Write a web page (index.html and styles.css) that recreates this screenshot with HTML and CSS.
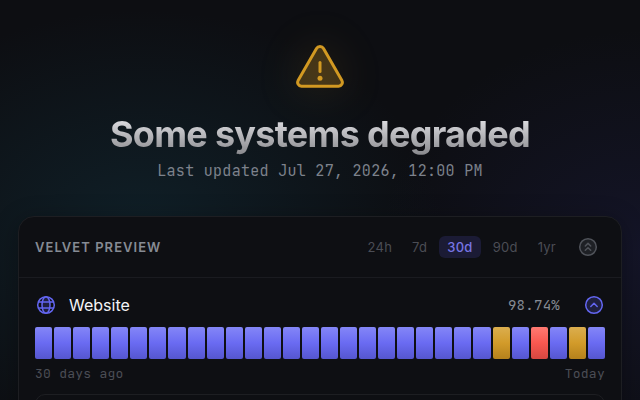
FILE: index.html
```html
<!DOCTYPE html>
<html lang="en">
<head>
    <meta charset="UTF-8">
    <meta name="viewport" content="width=device-width, initial-scale=1.0">
    <title>System Status</title>
    <link rel="stylesheet" href="styles.css">
</head>
<body>
    <header class="hero">
        <svg class="hero-icon" viewBox="0 0 64 64" aria-hidden="true">
            <path d="M28.500 12.600 a4 4 0 0 1 7 0 L53.900 44.600 a3.800 3.800 0 0 1 -3.300 5.600 H13.400 a3.800 3.800 0 0 1 -3.300 -5.600 Z"/>
            <path class="mark" d="M32 26.500v9"/>
            <circle cx="32" cy="42.300" r="2.500"/>
        </svg>
        <h1>Some systems degraded</h1>
        <p class="updated">Last updated Jul 27, 2026, 12:00 PM</p>
    </header>

    <main class="card">
        <div class="card-header">
            <h2>Velvet Preview</h2>
            <div class="ranges">
                <button type="button">24h</button>
                <button type="button">7d</button>
                <button type="button" class="active">30d</button>
                <button type="button">90d</button>
                <button type="button">1yr</button>
            </div>
            <button type="button" class="toggle toggle-all" aria-label="Collapse all">
                <svg viewBox="0 0 20 20">
                    <circle cx="10" cy="10" r="8.300"/>
                    <path d="M7.300 9l2.700-2.600 2.700 2.600M7.300 13.300l2.700-2.600 2.700 2.600"/>
                </svg>
            </button>
        </div>

        <section class="service">
            <div class="service-row">
                <svg class="globe" viewBox="0 0 20 20" aria-hidden="true">
                    <circle cx="10" cy="10" r="8.300"/>
                    <ellipse cx="10" cy="10" rx="4" ry="8.300"/>
                    <path d="M2.500 7h15M2.500 13h15"/>
                </svg>
                <h3>Website</h3>
                <span class="uptime">98.74%</span>
                <button type="button" class="toggle" aria-label="Collapse Website">
                    <svg viewBox="0 0 20 20">
                        <circle cx="10" cy="10" r="8.300"/>
                        <path d="M6.800 11.500l3.200-3.200 3.200 3.200"/>
                    </svg>
                </button>
            </div>
            <div class="bars">
                <span></span><span></span><span></span><span></span><span></span><span></span>
                <span></span><span></span><span></span><span></span><span></span><span></span>
                <span></span><span></span><span></span><span></span><span></span><span></span>
                <span></span><span></span><span></span><span></span><span></span><span></span>
                <span class="warn"></span><span></span><span class="down"></span><span></span><span class="warn"></span><span></span>
            </div>
            <div class="legend">
                <span>30 days ago</span>
                <span>Today</span>
            </div>
            <div class="details"></div>
        </section>
    </main>
</body>
</html>
```
FILE: styles.css
```css
* {
    box-sizing: border-box;
}
html {
    height: 100%;
    overflow: hidden;
    background-color: #0d0e12;
}
body {
    min-height: 100%;
    margin: 0;
    padding: 36px 18px;
    font-family: Inter, sans-serif;
    color: #f4f4f6;
    background:
        radial-gradient(ellipse 300px 220px at 22% 230px, rgba(20, 60, 75, 0.38), transparent),
        radial-gradient(ellipse 260px 220px at 100% 250px, rgba(36, 36, 90, 0.3), transparent);
}
h1, h2, h3, p {
    margin: 0;
}
button {
    border: none;
    padding: 0;
    background: none;
    font-family: inherit;
    cursor: pointer;
}
svg {
    display: block;
    fill: none;
    stroke: currentColor;
    stroke-linecap: round;
    stroke-linejoin: round;
}

.hero {
    display: flex;
    flex-direction: column;
    align-items: center;
    text-align: center;
    margin-bottom: 35px;
}
.hero-icon {
    width: 64px;
    height: 64px;
    color: #d29922;
    stroke-width: 3;
    filter: drop-shadow(0 0 20px rgba(210, 153, 34, 0.3));
}
.hero-icon path {
    fill: rgba(210, 153, 34, 0.25);
}
.hero-icon circle {
    fill: currentColor;
    stroke: none;
}
.hero h1 {
    margin-top: 12px;
    font-size: 36px;
    line-height: 44px;
    font-weight: 700;
    letter-spacing: -0.02em;
    color: transparent;
    background: linear-gradient(180deg, #eeeef2, #86868a);
    -webkit-background-clip: text;
    background-clip: text;
}
.updated {
    margin-top: 5px;
    font-family: "JetBrains Mono", "DejaVu Sans Mono", monospace;
    font-size: 15px;
    line-height: 20px;
    letter-spacing: 0.02em;
    color: #7d828c;
}

.card {
    border: 1px solid #1d1e22;
    border-radius: 16px;
    background-color: #0e0f13;
    box-shadow: 0 4px 24px rgba(0, 0, 0, 0.3);
}
.card-header {
    display: flex;
    align-items: center;
    height: 61px;
    padding: 0 16px;
    border-bottom: 1px solid #1a1b20;
}
.card-header h2 {
    flex: 1;
    font-size: 13px;
    font-weight: 600;
    letter-spacing: 0.08em;
    text-transform: uppercase;
    color: #868b94;
}
.ranges {
    display: flex;
    gap: 4px;
}
.ranges button {
    height: 22px;
    padding: 0 8px;
    border-radius: 6px;
    font-size: 13px;
    letter-spacing: 0.02em;
    color: #4b4d55;
}
.ranges .active {
    font-weight: 500;
    color: #7775e4;
    background-color: #1b1b35;
}
.toggle {
    color: #6366f1;
}
.toggle svg {
    width: 20px;
    height: 20px;
    stroke-width: 1.5;
}
.toggle circle {
    fill: rgba(99, 102, 241, 0.2);
}
.toggle-all {
    margin: 0 7px 0 14px;
    color: #50535a;
}
.toggle-all circle {
    fill: rgba(80, 83, 90, 0.25);
}

.service {
    padding: 15px 16px;
}
.service-row {
    display: flex;
    align-items: center;
    height: 24px;
    margin-bottom: 10px;
    padding: 0 1px;
}
.globe {
    width: 20px;
    height: 20px;
    margin-right: 13px;
    color: #6366f1;
    stroke-width: 1.5;
}
.globe ellipse {
    fill: rgba(99, 102, 241, 0.2);
}
.service h3 {
    flex: 1;
    font-size: 16px;
    font-weight: 400;
}
.uptime {
    margin-right: 24px;
    font-family: "JetBrains Mono", "DejaVu Sans Mono", monospace;
    font-size: 14px;
    line-height: 20px;
    letter-spacing: 0.02em;
    color: #868b94;
}
.bars {
    display: flex;
    gap: 2px;
    height: 32px;
}
.bars span {
    flex: 1;
    border-radius: 2px;
    background: linear-gradient(180deg, #8486f7, #6a6bf2 50%, #5556cf);
}
.bars .warn {
    background: linear-gradient(180deg, #dbae4f, #d29b2a 50%, #b5811c);
}
.bars .down {
    background: linear-gradient(180deg, #ff7a72, #f85850 50%, #d64740);
}
.legend {
    display: flex;
    justify-content: space-between;
    margin: 6px 0 11px;
    font-family: "JetBrains Mono", "DejaVu Sans Mono", monospace;
    font-size: 13px;
    line-height: 18px;
    letter-spacing: 0.02em;
    color: #4b4d55;
}
.details {
    height: 80px;
    border: 1px solid #1d1e22;
    border-radius: 10px;
}
```
